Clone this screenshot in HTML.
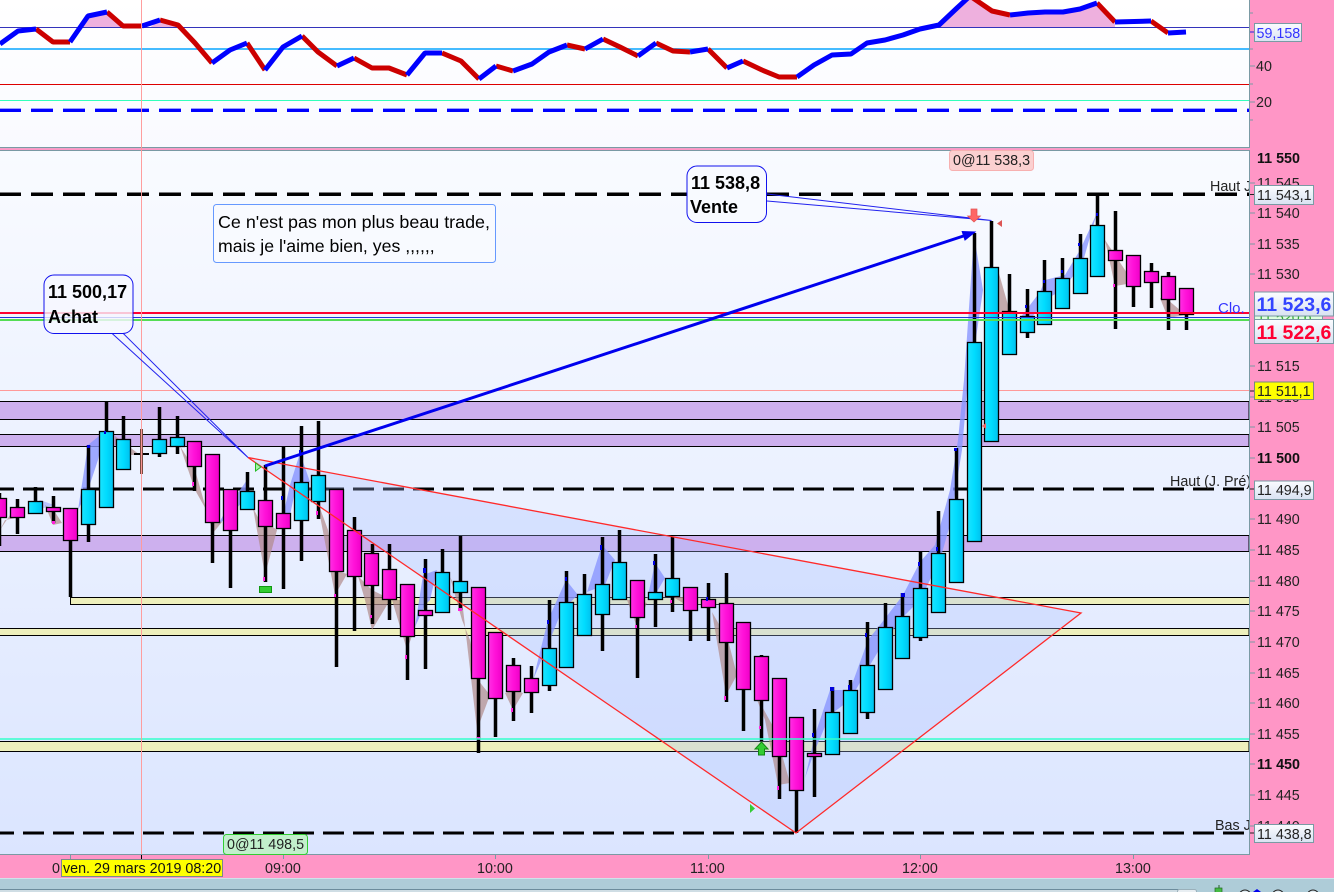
<!DOCTYPE html>
<html><head><meta charset="utf-8"><title>Chart</title>
<style>
html,body{margin:0;padding:0;background:#ff96c6;width:1334px;height:892px;overflow:hidden}
svg{display:block;font-family:"Liberation Sans",Arial,sans-serif}
.up{fill:url(#cy);stroke:#000;stroke-width:1.3}
.dn{fill:url(#mg);stroke:#000;stroke-width:1.3}
.ax{font-size:14.3px;fill:#222}
.bx{fill:url(#lb);stroke:#7a9aa4;stroke-width:1}
.z{stroke:#000;stroke-width:1}
</style></head><body>
<svg width="1334" height="892" viewBox="0 0 1334 892" xmlns="http://www.w3.org/2000/svg">
<defs>
<linearGradient id="cy" x1="0" x2="1" y1="0" y2="0"><stop offset="0" stop-color="#1ce4ff"/><stop offset=".5" stop-color="#00dcff"/><stop offset="1" stop-color="#00c0ee"/></linearGradient>
<linearGradient id="mg" x1="0" x2="1" y1="0" y2="0"><stop offset="0" stop-color="#ff30e4"/><stop offset=".5" stop-color="#ff10d8"/><stop offset="1" stop-color="#f000c8"/></linearGradient>
<linearGradient id="tp" x1="0" x2="0" y1="0" y2="1"><stop offset="0" stop-color="#ffffff"/><stop offset="1" stop-color="#f9faff"/></linearGradient>
<linearGradient id="mp" x1="0" x2="0" y1="0" y2="1"><stop offset="0" stop-color="#f9fbff"/><stop offset="1" stop-color="#dbe5ff"/></linearGradient>
<linearGradient id="lb" x1="0" x2="0" y1="0" y2="1"><stop offset="0" stop-color="#fbfcff"/><stop offset="1" stop-color="#d9e2f2"/></linearGradient>
</defs>
<rect width="1334" height="892" fill="#ff96c6"/>
<!-- top panel -->
<rect x="-1" y="-1" width="1250.5" height="148.5" fill="url(#tp)" stroke="#7a9aa4"/>
<path d="M80 27.5 88 16 107 12 123 26 123 27.5ZM150 27.5 160 20 178 25 185 27.5ZM938 27.5 957 8 970 -4 992 11 1010 15 1028 13 1045 12 1063 12 1080 9 1097 3 1115 22 1115 27.5Z" fill="#eeb0de"/>
<path d="M0 27.5H1249" stroke="#3333bb" stroke-width="1"/>
<path d="M0 49H1249" stroke="#44bbff" stroke-width="2"/>
<path d="M0 84.5H1249" stroke="#dd0000" stroke-width="1"/>
<path d="M0 100.5H1249" stroke="#33ffbb" stroke-width="1"/>
<path d="M-1 110.3H1249" stroke="#0000ff" stroke-width="3.4" stroke-dasharray="22 10"/>
<g fill="none" stroke-width="5" stroke-linejoin="bevel">
<g stroke="#cc0000">
<path d="M36 29 53 42 70 42"/><path d="M107 12 123 26 142 26"/><path d="M160 20 178 25 195 43 212 63"/><path d="M247 43 265 70"/><path d="M302 36 318 52 337 66"/><path d="M354 58 372 68 389 68 407 75"/><path d="M442 53 461 61 479 79"/><path d="M496 66 513 71"/><path d="M567 45 585 49"/><path d="M603 39 620 47 638 56"/><path d="M656 43 673 51 690 52"/><path d="M708 49 727 68"/><path d="M743 61 762 70 779 77 797 77"/><path d="M970 -4 992 11 1010 15"/><path d="M1097 3 1115 22"/><path d="M1151 21 1168 33"/>
</g>
<g stroke="#0000ff">
<path d="M0 44 18 31 36 29"/><path d="M70 42 88 16 107 12"/><path d="M142 26 160 20"/><path d="M212 63 230 50 247 43"/><path d="M265 70 283 47 302 36"/><path d="M337 66 354 58"/><path d="M407 75 425 53 442 53"/><path d="M479 79 496 66"/><path d="M513 71 532 64 549 52 567 45"/><path d="M585 49 603 39"/><path d="M638 56 656 43"/><path d="M690 52 708 49"/><path d="M727 68 743 61"/><path d="M797 77 814 65 832 55 851 54 867 43 885 40 903 35 920 29 939 25 957 8 970 -4"/><path d="M1010 15 1028 13 1045 12 1063 12 1080 9 1097 3"/><path d="M1115 22 1151 21"/><path d="M1168 33 1186 32"/>
</g></g>
<!-- main panel -->
<rect x="-1" y="150.5" width="1250.5" height="704" fill="url(#mp)" stroke="#7a9aa4"/>
<path d="M0 148.5H1249" stroke="#f2a0c8" stroke-width="1"/>
<!-- zones -->
<g class="z">
<rect x="-1" y="401.5" width="1250" height="18" fill="#cdb0ee"/>
<rect x="-1" y="434.5" width="1250" height="12" fill="#cdb0ee"/>
<rect x="-1" y="535.5" width="1250" height="16" fill="#cdb0ee"/>
<rect x="70.5" y="597.5" width="1179" height="7" fill="#eef0bc"/>
<rect x="-1" y="628.5" width="1250" height="7" fill="#eef0bc"/>
<rect x="-1" y="741.5" width="1250" height="10" fill="#eef0bc"/>
</g>
<path d="M0 390.5H1249" stroke="#ff9999" stroke-width="1"/>
<path d="M-1 194.3H1249" stroke="#000" stroke-width="3.5" stroke-dasharray="22 10"/>
<path d="M-7 489H1249" stroke="#000" stroke-width="3" stroke-dasharray="21 9"/>
<path d="M-7 833H1249" stroke="#000" stroke-width="3" stroke-dasharray="21 9"/>
<!-- triangle fill -->
<path d="M248 457.5 796 833 1081 613Z" fill="#a8c0ff" fill-opacity=".3"/>
<!-- blue zigzag -->
<g fill="#8a96ff" fill-opacity=".8">
<path d="M78 510 88 445 104 432 98 460 88 490Z"/>
<path d="M218 525 226 510 247 480 245 500 226 518Z"/>
<path d="M282 520 290 485 300 453 310 482 297 482 290 515Z"/>
<path d="M415 627 423 575 437 570 430 600 425 605Z"/>
<path d="M533 680 548 620 566 580 578 595 562 610 550 640Z"/>
<path d="M587 592 602 545 615 560 605 585Z"/>
<path d="M647 600 655 563 665 578 655 595Z"/>
<path d="M805 778 815 735 830 690 850 690 868 640 880 625 903 595 920 562 935 545 950 490 958 440 964 380 974 235 983 290 975 345 968 380 962 450 950 525 940 560 920 600 905 615 885 640 870 665 850 700 830 715 815 750Z"/>
<path d="M1020 318 1040 292 1045 280 1065 275 1080 250 1097 213 1092 230 1082 265 1062 290 1045 300 1030 320Z"/>
<path d="M40 500 54 505 30 512Z" fill-opacity=".5"/>
</g>
<!-- brown zigzag -->
<g fill="#b08a8a" fill-opacity=".7">
<path d="M115 436 140 455 128 455 115 445Z"/>
<path d="M180 446 195 470 213 533 222 522 212 520 195 490Z"/>
<path d="M253 508 265 575 277 530 270 525 262 525Z"/>
<path d="M317 500 335 595 347 574 335 570 328 530Z"/>
<path d="M358 576 372 590 392 600 407 650 412 636 400 600 390 600 372 630 365 600Z"/>
<path d="M450 577 462 600 477 730 490 695 478 680 470 640 462 620Z"/>
<path d="M505 693 513 710 523 693 515 690Z"/>
<path d="M627 600 637 627 647 603 635 600Z"/>
<path d="M673 597 683 603 695 603 690 597Z"/>
<path d="M712 612 726 695 737 675 728 640Z"/>
<path d="M753 690 765 720 778 785 790 783 775 730Z"/>
<path d="M998 270 1010 312 998 312Z"/>
<path d="M1105 240 1115 286 1133 283 1125 270 1115 255Z"/>
<path d="M1160 298 1168 318 1186 315 1168 300Z"/>
<path d="M0 530 10 515 22 517 5 520Z"/>
<path d="M45 505 53 525 62 523 55 512Z"/>
</g>
<!-- wicks -->
<path fill="none" stroke="#000" stroke-width="3.5" d="M-.5 493V546M17.5 499V534M35.5 487V514M53.5 496V523M70.5 508V597M88.5 445V542M106.5 402V440M123.5 416V440M159.5 407V457M177.5 416V454M194.5 450V491M212.5 490V563M230.5 500V588M247.5 472V495M265.5 465V582M283.5 447V589M301.5 426V561M318.5 421V519M336.5 500V667M354.5 517V631M372.5 544V624M389.5 544V620M407.5 600V680M425.5 559V669M442.5 549V580M460.5 536V610M478.5 600V753M495.5 650V737M513.5 658V721M531.5 666V713M549.5 600V691M566.5 571V610M584.5 574V600M602.5 537V651M619.5 530V570M637.5 590V678M655.5 554V627M672.5 537V612M690.5 600V641M708.5 583V641M726.5 573V702M743.5 650V731M761.5 655V741M779.5 700V799M796.5 740V833M814.5 709V797M832.5 687V720M850.5 680V700M867.5 622V719M885.5 603V640M902.5 593V620M920.5 552V641M938.5 511V560M956.5 448V510M974.5 233V350M991.5 221V280M1009.5 274V320M1027.5 289V338M1044.5 260V300M1062.5 258V285M1080.5 234V265M1097.5 195V235M1115.5 211V329M1133.5 260V307M1151.5 263V308M1168.5 272V330M1186.5 295V330"/>
<!-- doji -->
<path d="M134 454H149" stroke="#000" stroke-width="2"/>
<path d="M141.5 429V474" stroke="#7a4a40" stroke-width="3"/>
<!-- bodies -->
<g>
<rect class="dn" x="-7.5" y="498.5" width="14" height="19"/>
<rect class="dn" x="10.5" y="507.5" width="14" height="10"/>
<rect class="dn" x="46.5" y="507.5" width="14" height="4"/>
<rect class="dn" x="63.5" y="508.5" width="14" height="32"/>
<rect class="dn" x="187.5" y="441.5" width="14" height="25"/>
<rect class="dn" x="205.5" y="454.5" width="14" height="68"/>
<rect class="dn" x="223.5" y="489.5" width="14" height="41"/>
<rect class="dn" x="258.5" y="500.5" width="14" height="26"/>
<rect class="dn" x="276.5" y="513.5" width="14" height="15"/>
<rect class="dn" x="329.5" y="489.5" width="14" height="82"/>
<rect class="dn" x="347.5" y="530.5" width="14" height="46"/>
<rect class="dn" x="364.5" y="553.5" width="14" height="32"/>
<rect class="dn" x="382.5" y="569.5" width="14" height="30"/>
<rect class="dn" x="400.5" y="584.5" width="14" height="52"/>
<rect class="dn" x="418.5" y="610.5" width="14" height="5"/>
<rect class="dn" x="471.5" y="587.5" width="14" height="91"/>
<rect class="dn" x="488.5" y="632.5" width="14" height="66"/>
<rect class="dn" x="506.5" y="665.5" width="14" height="26"/>
<rect class="dn" x="524.5" y="678.5" width="14" height="14"/>
<rect class="dn" x="630.5" y="580.5" width="14" height="37"/>
<rect class="dn" x="683.5" y="587.5" width="14" height="23"/>
<rect class="dn" x="701.5" y="599.5" width="14" height="8"/>
<rect class="dn" x="719.5" y="603.5" width="14" height="39"/>
<rect class="dn" x="736.5" y="622.5" width="14" height="67"/>
<rect class="dn" x="754.5" y="656.5" width="14" height="44"/>
<rect class="dn" x="772.5" y="678.5" width="14" height="78"/>
<rect class="dn" x="789.5" y="717.5" width="14" height="73"/>
<rect class="dn" x="807.5" y="753.5" width="14" height="3"/>
<rect class="dn" x="1108.5" y="250.5" width="14" height="10"/>
<rect class="dn" x="1126.5" y="255.5" width="14" height="31"/>
<rect class="dn" x="1144.5" y="271.5" width="14" height="11"/>
<rect class="dn" x="1161.5" y="276.5" width="14" height="23"/>
<rect class="dn" x="1179.5" y="288.5" width="14" height="26"/>
</g>
<g>
<rect class="up" x="28.5" y="501.5" width="14" height="12"/>
<rect class="up" x="81.5" y="489.5" width="14" height="35"/>
<rect class="up" x="99.5" y="431.5" width="14" height="76"/>
<rect class="up" x="116.5" y="439.5" width="14" height="30"/>
<rect class="up" x="152.5" y="439.5" width="14" height="14"/>
<rect class="up" x="170.5" y="437.5" width="14" height="9"/>
<rect class="up" x="240.5" y="491.5" width="14" height="18"/>
<rect class="up" x="294.5" y="482.5" width="14" height="38"/>
<rect class="up" x="311.5" y="475.5" width="14" height="26"/>
<rect class="up" x="435.5" y="572.5" width="14" height="40"/>
<rect class="up" x="453.5" y="581.5" width="14" height="11"/>
<rect class="up" x="542.5" y="648.5" width="14" height="37"/>
<rect class="up" x="559.5" y="602.5" width="14" height="65"/>
<rect class="up" x="577.5" y="594.5" width="14" height="41"/>
<rect class="up" x="595.5" y="584.5" width="14" height="30"/>
<rect class="up" x="612.5" y="562.5" width="14" height="37"/>
<rect class="up" x="648.5" y="592.5" width="14" height="7"/>
<rect class="up" x="665.5" y="578.5" width="14" height="18"/>
<rect class="up" x="825.5" y="712.5" width="14" height="42"/>
<rect class="up" x="843.5" y="690.5" width="14" height="43"/>
<rect class="up" x="860.5" y="665.5" width="14" height="47"/>
<rect class="up" x="878.5" y="627.5" width="14" height="62"/>
<rect class="up" x="895.5" y="616.5" width="14" height="42"/>
<rect class="up" x="913.5" y="588.5" width="14" height="49"/>
<rect class="up" x="931.5" y="553.5" width="14" height="59"/>
<rect class="up" x="949.5" y="499.5" width="14" height="83"/>
<rect class="up" x="967.5" y="342.5" width="14" height="199"/>
<rect class="up" x="984.5" y="267.5" width="14" height="174"/>
<rect class="up" x="1002.5" y="311.5" width="14" height="43"/>
<rect class="up" x="1020.5" y="316.5" width="14" height="16"/>
<rect class="up" x="1037.5" y="291.5" width="14" height="33"/>
<rect class="up" x="1055.5" y="278.5" width="14" height="30"/>
<rect class="up" x="1073.5" y="258.5" width="14" height="35"/>
<rect class="up" x="1090.5" y="225.5" width="14" height="51"/>
</g>
<!-- small ticks -->
<path d="M87 445h3v3h-3zM104 431h2v3h-2zM299 450h2v6h-2zM281 496h2v4h-2zM423 568h3v5h-3zM547 620h2v4h-2zM565 577h2v4h-2zM600 545h2v5h-2zM653 561h2v4h-2zM706 597h2v4h-2zM812 733h2v4h-2zM830 687h4v4h-4zM848 685h2v5h-2zM865 633h2v4h-2zM901 593h4v4h-4zM918 562h2v4h-2zM936 547h2v4h-2zM954 448h3v3h-3zM1025 305h2v3h-2zM1043 280h2v3h-2zM1061 270h2v3h-2zM1078 243h2v3h-2zM1096 213h2v3h-2z" fill="#0000dd"/>
<path d="M52 521h3v3h-3zM192 482h2v4h-2zM263 577h2v4h-2zM316 511h2v4h-2zM334 594h2v3h-2zM370 615h2v3h-2zM405 655h2v4h-2zM458 608h4v3h-4zM477 737h3v2h-3zM511 708h2v4h-2zM635 625h2v3h-2zM670 600h2v3h-2zM724 696h2v4h-2zM759 726h2v3h-2zM777 786h2v4h-2zM1113 284h2v3h-2z" fill="#ff22dd"/>
<!-- horizontals over -->
<path d="M0 739H1249" stroke="#33ffcc" stroke-width="1.5"/>
<path d="M0 317.5H1249" stroke="#2233dd" stroke-width="1"/>
<path d="M0 320H1249" stroke="#55dd55" stroke-width="2"/>
<path d="M0 313H1249" stroke="#ff0033" stroke-width="2"/>
<!-- crosshair -->
<path d="M141.5 0V854" stroke="#ff9999" stroke-width="1" stroke-opacity=".95"/>
<!-- triangle lines -->
<path d="M248 457.5 796 833 1081 613Z" fill="none" stroke="#ff2a2a" stroke-width="1.3"/>
<!-- arrows -->
<path d="M265 466 968 234.5" stroke="#0000ee" stroke-width="3" fill="none"/>
<path d="M975 232 962.2 231.5 965 240Z" fill="#0000ee" stroke="#0000ee"/>
<path d="M111.6 333 248 457.5M122.8 333 248 457.5M767 194 991.5 220.5M767 201 991.5 220.5" stroke="#2222ee" stroke-width="1" fill="none"/>
<!-- markers -->
<path d="M255.5 463 261 467 255.5 471Z" fill="#aaf0aa" stroke="#22bb22"/>
<rect x="259.5" y="586.5" width="12" height="6" fill="#33cc33" stroke="#119911"/>
<path d="M750 804 755 808.5 750 813Z" fill="#33cc33"/>
<path d="M761.5 742 768 749H764.5V755H758.5V749H755Z" fill="#33cc33" stroke="#118811"/>
<path d="M971 209H977V216H980.5L974 222 967.5 216H971Z" fill="#ff6666" stroke="#e05555" stroke-width=".7"/>
<path d="M1002 220V227L997 223.5Z" fill="#dd5555"/>
<path d="M986 423V429L982 426Z" fill="#ee6666"/>
<!-- callouts -->
<rect x="44" y="275" width="89" height="58.5" rx="10" fill="#f6f8ff" fill-opacity=".8" stroke="#1111ee"/>
<text x="48" y="298" font-size="18" font-weight="bold" fill="#000">11 500,17</text>
<text x="48" y="323" font-size="18" font-weight="bold" fill="#000">Achat</text>
<rect x="687" y="166" width="79.5" height="56.5" rx="10" fill="#f8faff" stroke="#1111ee"/>
<text x="691" y="189" font-size="18" font-weight="bold" fill="#000">11 538,8</text>
<text x="690" y="213" font-size="18" font-weight="bold" fill="#000">Vente</text>
<rect x="213.5" y="204.5" width="282" height="58" rx="3" fill="#f8faff" stroke="#6699ff"/>
<text x="218" y="228" font-size="17.9" fill="#000">Ce n'est pas mon plus beau trade,</text>
<text x="218" y="252" font-size="17.7" fill="#000">mais je l'aime bien, yes ,,,,,,</text>
<!-- pos labels -->
<rect x="949.5" y="150.5" width="84" height="20" rx="3" fill="#fbd0d0" stroke="#f7b0b0"/>
<text x="953" y="165" class="ax">0@11 538,3</text>
<rect x="223.5" y="834.5" width="84" height="20" rx="3" fill="#c2f0cc" stroke="#33cc33"/>
<text x="227" y="849" class="ax">0@11 498,5</text>
<!-- right-side names -->
<text x="1210" y="191" class="ax">Haut J</text>
<text x="1170" y="486" class="ax">Haut (J. Pré)</text>
<text x="1218" y="313" font-size="15" fill="#3333ff">Clo. J</text>
<text x="1215" y="830" class="ax">Bas J</text>
<!-- axis right -->
<rect x="1250" y="150" width="84" height="706" fill="#ff96c6"/>
<rect x="1250" y="0" width="84" height="148" fill="#ff96c6"/>
<path d="M1249.5 0V147M1249.5 150V854" stroke="#7a9aa4"/>
<path d="M1250 13H1253M1250 49H1253M1250 66H1255M1250 84H1253M1250 102H1255M1250 120H1253M1250 183H1255M1250 213H1255M1250 244H1255M1250 274H1255M1250 366H1255M1250 397H1255M1250 427H1255M1250 458H1255M1250 519H1255M1250 550H1255M1250 581H1255M1250 611H1255M1250 642H1255M1250 673H1255M1250 703H1255M1250 734H1255M1250 764H1255M1250 795H1255M1250 826H1255" stroke="#7a9aa4" fill="none"/>
<path d="M1250 32H1254" stroke="#2222dd"/>
<path d="M1250 194.5H1254M1250 489H1254M1250 833H1254M1250 391H1254" stroke="#222"/>
<text x="1256" y="71" class="ax">40</text>
<text x="1256" y="107" class="ax">20</text>
<g>
<text class="ax" x="1257" y="163" font-weight="bold" style="fill:#111">11 550</text>
<text class="ax" x="1257" y="188">11 545</text>
<text class="ax" x="1257" y="218">11 540</text>
<text class="ax" x="1257" y="249">11 535</text>
<text class="ax" x="1257" y="279">11 530</text>
<text class="ax" x="1257" y="371">11 515</text>
<text class="ax" x="1257" y="402">11 510</text>
<text class="ax" x="1257" y="432">11 505</text>
<text class="ax" x="1257" y="463" font-weight="bold" style="fill:#111">11 500</text>
<text class="ax" x="1257" y="524">11 490</text>
<text class="ax" x="1257" y="555">11 485</text>
<text class="ax" x="1257" y="586">11 480</text>
<text class="ax" x="1257" y="616">11 475</text>
<text class="ax" x="1257" y="647">11 470</text>
<text class="ax" x="1257" y="678">11 465</text>
<text class="ax" x="1257" y="708">11 460</text>
<text class="ax" x="1257" y="739">11 455</text>
<text class="ax" x="1257" y="769" font-weight="bold" style="fill:#111">11 450</text>
<text class="ax" x="1257" y="800">11 445</text>
<text class="ax" x="1257" y="831">11 440</text>
</g>
<!-- boxes -->
<rect class="bx" x="1254.5" y="23.5" width="47" height="18"/>
<text x="1256.5" y="38" font-size="14.3" fill="#3333ff">59,158</text>
<rect class="bx" x="1254.5" y="185.5" width="59" height="19"/>
<text x="1257" y="200" class="ax">11 543,1</text>
<rect x="1254.5" y="305.5" width="68" height="22" fill="#e0ffe0" stroke="#7a9aa4"/>
<text x="1257" y="322" font-size="14.3" fill="#33aa33">11 520,6</text>
<rect class="bx" x="1254.5" y="292" width="79" height="24"/>
<text x="1256.5" y="311" font-size="19.5" font-weight="bold" fill="#3344ff">11 523,6</text>
<rect class="bx" x="1254.5" y="319.5" width="79" height="24"/>
<text x="1256.5" y="339" font-size="19.5" font-weight="bold" fill="#ff0033">11 522,6</text>
<rect x="1254.5" y="382" width="59" height="17.5" fill="#ffff00" stroke="#7a8a7a"/>
<text x="1257" y="396" class="ax">11 511,1</text>
<rect class="bx" x="1254.5" y="481" width="59" height="18.5"/>
<text x="1257" y="495" class="ax">11 494,9</text>
<rect class="bx" x="1254.5" y="824.5" width="59" height="18"/>
<text x="1257" y="839" class="ax">11 438,8</text>
<!-- time axis -->
<path d="M70.5 855V859M283.5 855V859M495.5 855V859M708.5 855V859M920.5 855V859M1133.5 855V859" stroke="#7a9aa4"/>
<path d="M141.5 855V859" stroke="#000"/>
<text x="52" y="873" class="ax">0</text>
<rect x="61.5" y="859.5" width="161" height="17" fill="#ffff00" stroke="#7a8a8a"/>
<text x="63" y="873" class="ax" style="fill:#111">ven. 29 mars 2019 08:20</text>
<text x="265" y="873" class="ax">09:00</text>
<text x="477" y="873" class="ax">10:00</text>
<text x="690" y="873" class="ax">11:00</text>
<text x="902" y="873" class="ax">12:00</text>
<text x="1115" y="873" class="ax">13:00</text>
<!-- bottom toolbar -->
<rect x="0" y="878" width="1334" height="14" fill="#aeccd8"/>
<path d="M0 878.5H1334" stroke="#d0e2ea"/>
<rect x="-2" y="889.5" width="1180" height="6" fill="#cfdde4" stroke="#6c8c9c"/>
<rect x="1177.5" y="889.5" width="19" height="6" rx="2" fill="#e8eef2" stroke="#9ab0ba"/>
<rect x="1215" y="888" width="7" height="5" fill="#44bb44" stroke="#226622" stroke-width=".7"/>
<path d="M1219 885V888" stroke="#226622"/>
<g fill="#ddeaf0" stroke="#222" stroke-width="1"><circle cx="1245" cy="896" r="6"/><circle cx="1278" cy="896" r="6"/><circle cx="1313" cy="896" r="6"/></g>
<path d="M1257 889 1253 892H1261Z" fill="#0000ee"/>
</svg>
</body></html>
